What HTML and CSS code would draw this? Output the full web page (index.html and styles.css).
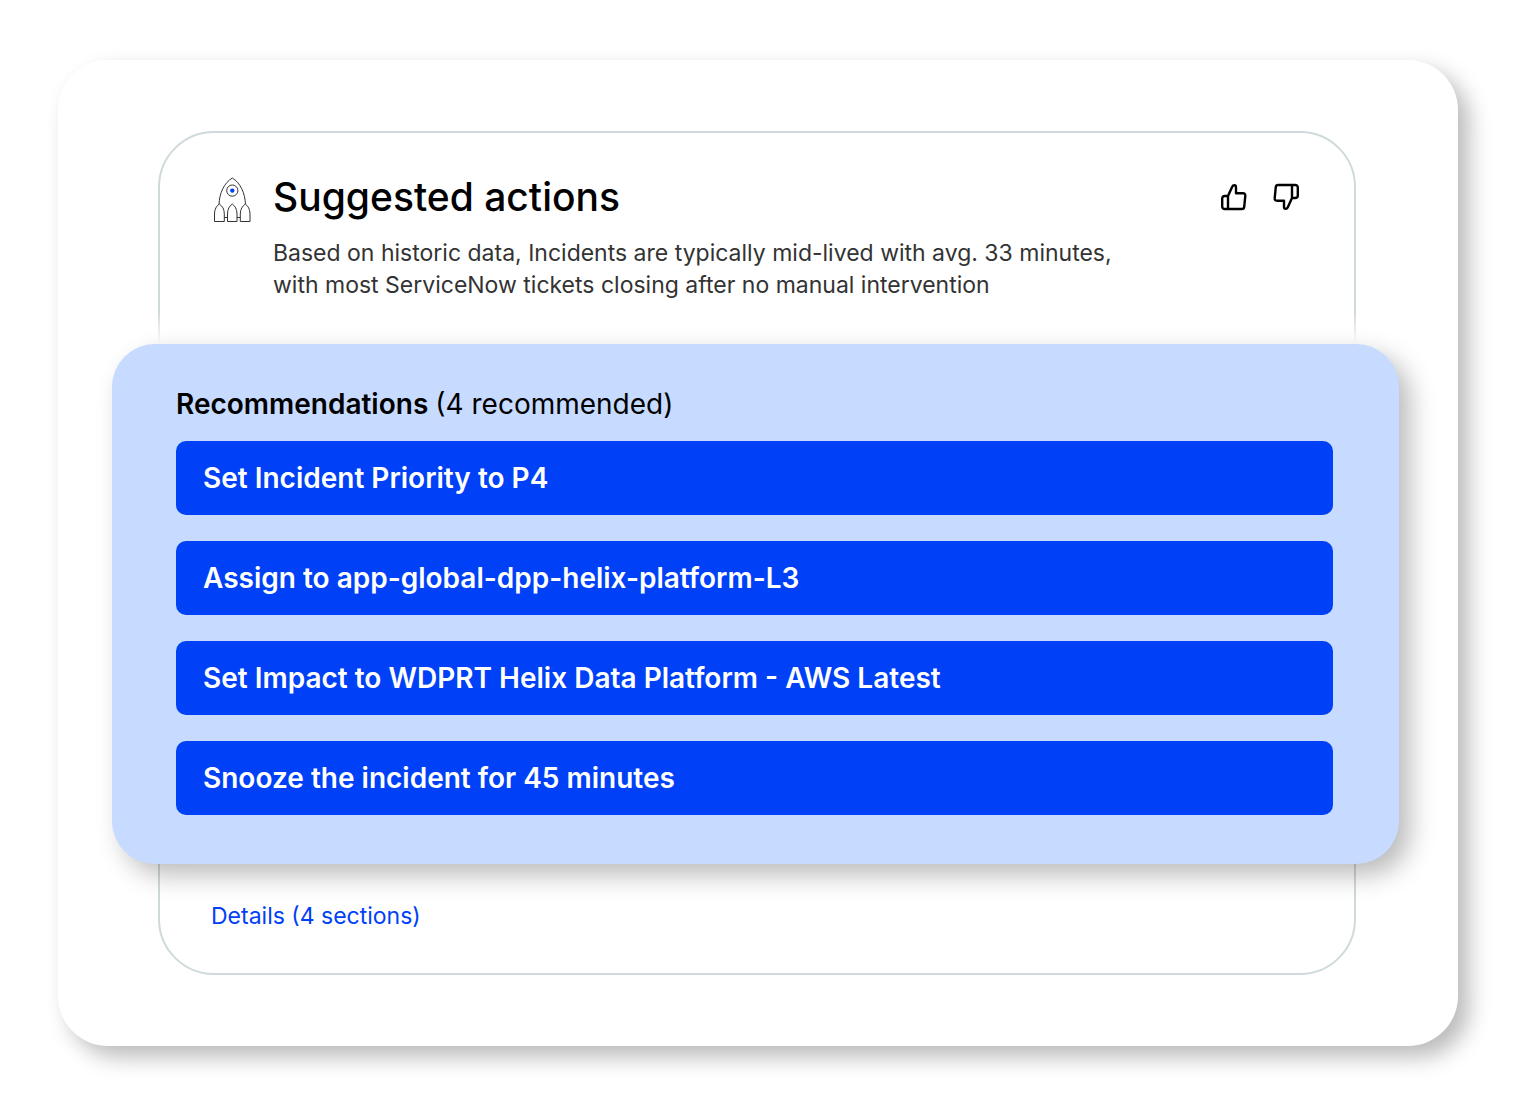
FILE: index.html
```html
<!DOCTYPE html>
<html lang="en">
<head>
  <meta charset="UTF-8" />
  <meta name="viewport" content="width=device-width, initial-scale=1.0"/>
  <title>Suggested actions</title>
  <link rel="stylesheet" href="styles.css">
</head>
<body>
  <main class="frame">
    <article class="card">
      <header class="card-header">
        <svg class="rocket" viewBox="0 0 38 46" aria-hidden="true">
          <path d="M6 27.5C6.500 16 11 6 19.300 1C27.500 6 32 16 32.500 27.500"/>
          <path d="M1.500 44.500V37C1.500 32 3.500 29 6.300 27C9.300 29 11.300 32 11.300 37V44.500Z"/>
          <path d="M14.500 44.500V37C14.500 32 16.500 29 19.300 27C22 29 24 32 24 37V44.500Z"/>
          <path d="M27.300 44.500V37C27.300 32 29.500 29 32.300 27C35 29 37 32 37 37V44.500Z"/>
          <path d="M11.300 40.500H14.500M24 40.500H27.300"/>
          <circle cx="19.300" cy="13.600" r="5.600"/>
          <circle class="rocket-window" cx="19.300" cy="13.600" r="2.200"/>
        </svg>
        <div class="intro">
          <h1>Suggested actions</h1>
          <p>Based on historic data, Incidents are typically mid-lived with avg. 33 minutes,<br>with most ServiceNow tickets closing after no manual intervention</p>
        </div>
        <div class="feedback">
          <button type="button" aria-label="Helpful">
            <svg class="thumb" viewBox="0 0 28 28" aria-hidden="true">
              <path d="M8 13L12.200 3.800C12.700 2.600 13.500 2.200 14.300 2.200C15.300 2.200 16 3 16 4V10.300H23C24.700 10.300 25.500 11.400 25.300 12.800L24.200 24C24 25.300 23.200 26 22 26H5C3.200 26 2.200 25 2.200 23.400V15.600C2.200 14 3.200 13 5 13H8V26"/>
            </svg>
          </button>
          <button type="button" aria-label="Not helpful">
            <svg class="thumb thumb-down" viewBox="0 0 28 28" aria-hidden="true">
              <path d="M8 13L12.200 3.800C12.700 2.600 13.500 2.200 14.300 2.200C15.300 2.200 16 3 16 4V10.300H23C24.700 10.300 25.500 11.400 25.300 12.800L24.200 24C24 25.300 23.200 26 22 26H5C3.200 26 2.200 25 2.200 23.400V15.600C2.200 14 3.200 13 5 13H8V26"/>
            </svg>
          </button>
        </div>
      </header>

      <section class="recommendations">
        <h2>Recommendations <span>(4 recommended)</span></h2>
        <div class="actions">
          <button type="button">Set Incident Priority to P4</button>
          <button type="button">Assign to app-global-dpp-helix-platform-L3</button>
          <button type="button">Set Impact to WDPRT Helix Data Platform - AWS Latest</button>
          <button type="button">Snooze the incident for 45 minutes</button>
        </div>
      </section>

      <footer class="card-footer">
        <a href="#">Details (4 sections)</a>
      </footer>
    </article>
  </main>
</body>
</html>
```
FILE: styles.css
```css
:root {
  --blue: #0041f8;
  --panel: #c7daff;
  --line: #d0d9db;
  --shadow: rgba(0, 0, 0, 0.27);
}

* {
  box-sizing: border-box;
}

body {
  margin: 0;
  padding: 60px 58px;
  background: #fff;
  color: #000;
  font-family: Inter, "Liberation Sans", sans-serif;
}

h1,
h2,
p {
  margin: 0;
}

button {
  font: inherit;
  border: none;
  cursor: pointer;
}

.frame {
  padding: 71px 102px 71px 100px;
  border-radius: 50px;
  background: #fff;
  box-shadow: 11px 11px 22px var(--shadow);
}

.card {
  isolation: isolate;
  border: 2px solid var(--line);
  border-radius: 56px;
}

.card-header {
  display: flex;
  align-items: flex-start;
  padding: 44px 54px 43px 53px;
}

/* Rocket */
.rocket {
  flex: none;
  width: 38px;
  height: 46px;
  margin-right: 22px;
  fill: #fff;
  stroke: #333;
  stroke-width: 1;
}

.rocket .rocket-window {
  fill: var(--blue);
  stroke: none;
}

.intro {
  flex: 1;
}

.intro h1 {
  font-size: 39px;
  line-height: 40px;
  font-weight: 500;
}

.intro p {
  margin-top: 20px;
  font-size: 23px;
  line-height: 32px;
  color: #333;
}

.feedback {
  display: flex;
  gap: 24px;
  padding-top: 6px;
}

.feedback button {
  padding: 0;
  background: none;
}

.thumb {
  display: block;
  width: 28px;
  height: 28px;
  fill: none;
  stroke: #000;
  stroke-width: 2.4;
  stroke-linejoin: round;
}

.thumb-down {
  transform: rotate(180deg);
}

/* Recommendations panel, wider than the card */
.recommendations {
  position: relative;
  margin: 0 -45px 0 -48px;
  padding: 42px 66px 49px 64px;
  border-radius: 43px;
  background: var(--panel);
  box-shadow: 11px 11px 26px var(--shadow);
}

/* Fades the card border out above the panel */
.recommendations::before {
  content: '';
  position: absolute;
  z-index: -1;
  left: 0;
  right: 0;
  bottom: 100%;
  height: 32px;
  background: linear-gradient(to bottom, rgba(255, 255, 255, 0), #fff);
}

.recommendations h2 {
  font-size: 28px;
  line-height: 36px;
  font-weight: 600;
}

.recommendations h2 span {
  font-weight: 400;
}

.actions {
  display: grid;
  gap: 26px;
  margin-top: 19px;
}

.actions button {
  padding: 19px 27px;
  border-radius: 10px;
  background: var(--blue);
  color: #fff;
  font-size: 28px;
  line-height: 36px;
  font-weight: 600;
  text-align: left;
}

.card-footer {
  padding: 36px 51px 41px;
}

.card-footer a {
  color: var(--blue);
  font-size: 23px;
  line-height: 32px;
  text-decoration: none;
}
```
